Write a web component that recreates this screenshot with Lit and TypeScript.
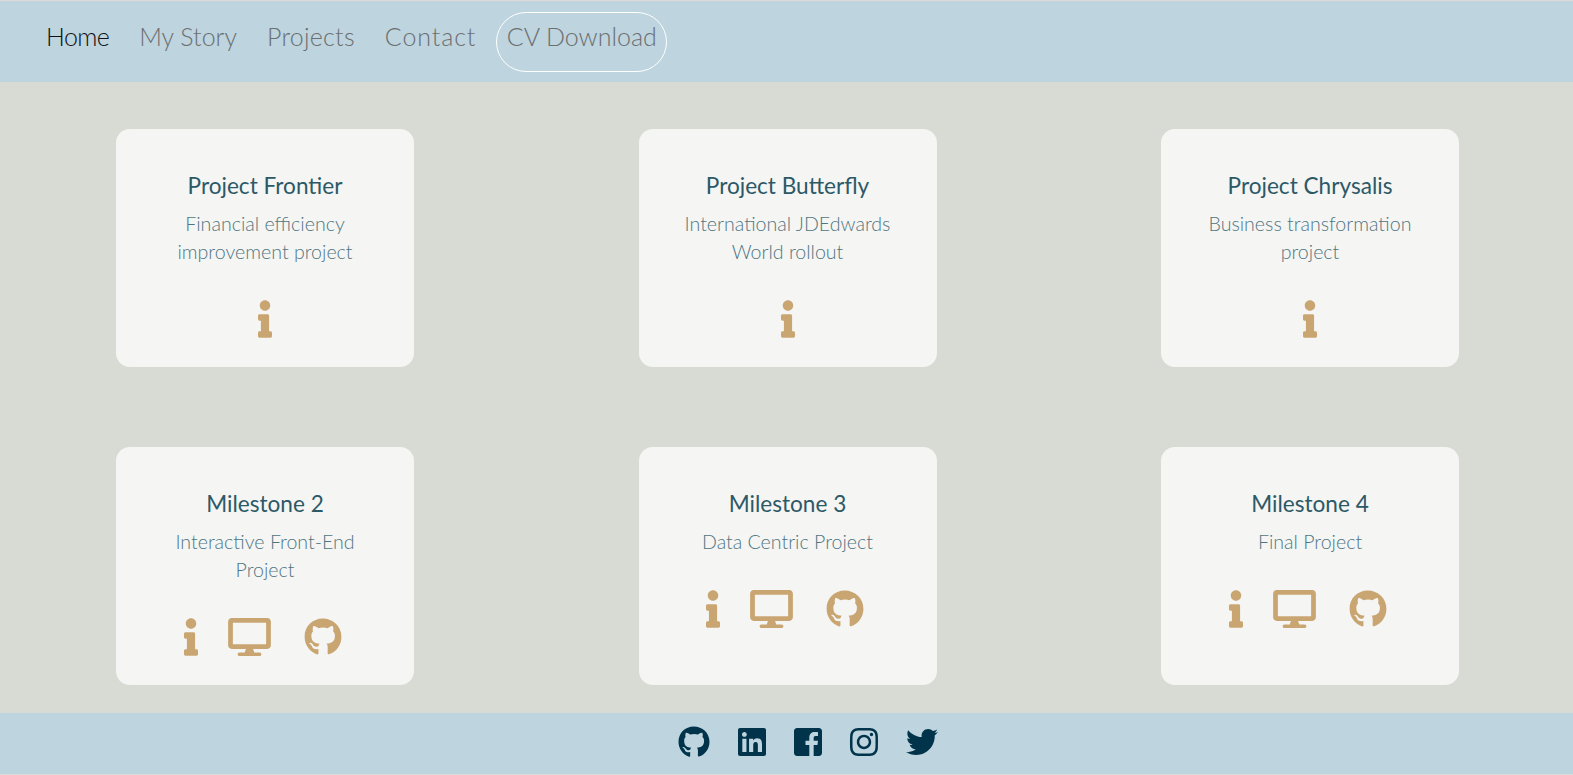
import { LitElement, html, css, svg } from 'lit';
import { customElement } from 'lit/decorators.js';

const GITHUB = svg`<path d="M244.8 8C106.1 8 0 113.3 0 252c0 110.9 69.8 205.8 169.5 239.2 12.8 2.3 17.3-5.6 17.3-12.1 0-6.2-.3-40.400-.3-61.400 0 0-70 15-84.700-29.800 0 0-11.400-29.100-27.800-36.600 0 0-22.900-15.700 1.600-17.300 0 0 24.900 2 38.600 25.800 21.900 38.600 58.600 27.500 72.900 20.900 2.300-16 8.800-27.100 16-33.700-55.900-6.200-112.300-14.300-112.300-110.500 0-27.500 7.600-41.300 23.600-58.900-2.600-6.500-11.100-33.300 2.600-67.900 20.900-6.500 69 27 69 27 20-5.600 41.500-8.500 62.800-8.500s42.800 2.900 62.800 8.500c0 0 48.100-33.600 69-27 13.700 34.700 5.200 61.400 2.600 67.900 16 17.700 25.800 31.500 25.800 58.900 0 96.500-58.900 104.200-114.800 110.500 9.200 7.900 17 22.900 17 46.400 0 33.700-.3 75.400-.3 83.600 0 6.500 4.600 14.400 17.300 12.100C428.200 457.800 496 362.900 496 252 496 113.300 383.500 8 244.800 8z"/>`;

const infoIcon = html`<svg class="i-info" viewBox="0 0 192 512" fill="currentColor"><path d="M20 424.2h20V279.8H20c-11 0-20-9-20-20V212c0-11 9-20 20-20h112c11 0 20 9 20 20v212.2h20c11 0 20 9 20 20V492c0 11-9 20-20 20H20c-11 0-20-9-20-20v-47.8c0-11 9-20 20-20zM96 0C56.200 0 24 32.200 24 72s32.200 72 72 72 72-32.200 72-72S135.800 0 96 0z"/></svg>`;
const desktopIcon = html`<svg class="i-desktop" viewBox="0 0 576 512" fill="currentColor"><path d="M528 0H48C21.500 0 0 21.500 0 48v320c0 26.500 21.500 48 48 48h192l-16 48h-72c-13.300 0-24 10.700-24 24s10.700 24 24 24h272c13.300 0 24-10.700 24-24s-10.700-24-24-24h-72l-16-48h192c26.500 0 48-21.500 48-48V48c0-26.500-21.500-48-48-48zm-16 352H64V64h448v288z"/></svg>`;
const githubIcon = html`<svg class="i-github" viewBox="0 0 496 512" fill="currentColor">${GITHUB}</svg>`;

interface Card {
  title: string;
  text: string;
  full: boolean;
}

const CARDS: Card[] = [
  { title: 'Project Frontier', text: 'Financial efficiency improvement project', full: false },
  { title: 'Project Butterfly', text: 'International JDEdwards World rollout', full: false },
  { title: 'Project Chrysalis', text: 'Business transformation project', full: false },
  { title: 'Milestone 2', text: 'Interactive Front-End Project', full: true },
  { title: 'Milestone 3', text: 'Data Centric Project', full: true },
  { title: 'Milestone 4', text: 'Final Project', full: true },
];

@customElement('app-root')
export class AppRoot extends LitElement {
  static styles = css`
    :host {
      display: block;
      height: 775px;
      overflow: hidden;
      background: #dedbd6;
      font-family: 'Lato', 'Noto Sans', sans-serif;
    }

    header {
      margin-top: 1px;
      height: 81px;
      box-sizing: border-box;
      background: #bed4df;
      display: flex;
      align-items: center;
      padding-left: 31px;
      font-size: 25px;
      color: #6c6f70;
      font-weight: 300;
    }

    header a {
      padding: 0 15px 12px;
      white-space: nowrap;
    }

    header a.active {
      color: #111;
      letter-spacing: -0.6px;
    }

    header a.projects {
      letter-spacing: 0.25px;
    }

    header a.contact {
      letter-spacing: 0.9px;
    }

    header a.cv {
      margin-left: 5px;
      padding: 0 0 12px;
      width: 171px;
      height: 60px;
      box-sizing: border-box;
      border: 1px solid #fff;
      border-radius: 30px;
      display: flex;
      align-items: center;
      justify-content: center;
    }

    main {
      height: 631px;
      box-sizing: border-box;
      background: #d8dbd4;
      padding: 47px 114px 28px 116px;
      display: grid;
      grid-template-columns: repeat(3, 298px);
      grid-template-rows: 238px 238px;
      justify-content: space-between;
      row-gap: 80px;
    }

    .card {
      background: #f5f5f4;
      border-radius: 14px;
      padding: 44px 20px 0;
      display: flex;
      flex-direction: column;
      align-items: center;
      text-align: center;
    }

    h2 {
      margin: 0;
      font-size: 22.6px;
      line-height: 26px;
      font-weight: 400;
      color: #2c5966;
    }

    p {
      margin: 11px 0 0;
      width: 220px;
      font-size: 19.6px;
      line-height: 28px;
      font-weight: 300;
      color: #4f7582;
    }

    .icons {
      margin-top: 34px;
      height: 38px;
      display: flex;
      align-items: center;
      color: #c9a572;
    }

    .i-info { height: 38px; width: 14px; display: block; }
    .i-desktop { height: 38px; width: 43px; display: block; margin-left: 30px; }
    .i-github { height: 38px; width: 38px; display: block; margin-left: 33px; margin-right: 5px; }

    footer {
      height: 61px;
      box-sizing: border-box;
      background: #bed4df;
      padding: 0 0 3px 42px;
      display: flex;
      align-items: center;
      justify-content: center;
      gap: 24px;
      color: #01344b;
    }

    footer svg {
      display: block;
      height: 32px;
      width: 32px;
    }

    footer svg.linkedin,
    footer svg.twitter {
      margin-left: 2px;
    }
  `;

  private renderCard(card: Card) {
    return html`
      <div class="card">
        <h2>${card.title}</h2>
        <p>${card.text}</p>
        <div class="icons">
          ${infoIcon}
          ${card.full ? html`${desktopIcon}${githubIcon}` : ''}
        </div>
      </div>
    `;
  }

  render() {
    return html`
      <header>
        <a class="active">Home</a>
        <a>My Story</a>
        <a class="projects">Projects</a>
        <a class="contact">Contact</a>
        <a class="cv">CV Download</a>
      </header>
      <main>${CARDS.map((c) => this.renderCard(c))}</main>
      <footer>
        <svg viewBox="0 0 496 512" fill="currentColor">${GITHUB}</svg>
        <svg class="linkedin" viewBox="0 0 448 512" fill="currentColor"><path d="M416 32H31.900C14.300 32 0 46.500 0 64.300v383.400C0 465.500 14.300 480 31.900 480H416c17.600 0 32-14.500 32-32.300V64.300c0-17.800-14.400-32.300-32-32.300zM135.400 416H69V202.200h66.500V416zm-33.200-243c-21.300 0-38.500-17.300-38.500-38.500S80.900 96 102.200 96c21.200 0 38.500 17.300 38.500 38.500 0 21.300-17.200 38.500-38.500 38.500zm282.100 243h-66.400V312c0-24.800-.5-56.700-34.500-56.700-34.600 0-39.900 27-39.900 54.900V416h-66.400V202.200h63.700v29.200h.9c8.900-16.800 30.600-34.500 62.900-34.500 67.200 0 79.700 44.300 79.700 101.900V416z"/></svg>
        <svg viewBox="0 0 448 512" fill="currentColor"><path d="M448 80v352c0 26.500-21.500 48-48 48h-85.300V302.800h60.600l8.700-67.600h-69.300V192c0-19.600 5.400-32.900 33.500-32.900H384V98.700c-6.200-.8-27.400-2.700-52.200-2.700-51.600 0-87 31.500-87 89.400v49.900H184v67.600h60.900V480H48c-26.500 0-48-21.500-48-48V80c0-26.500 21.500-48 48-48h352c26.500 0 48 21.500 48 48z"/></svg>
        <svg viewBox="0 0 448 512" fill="currentColor"><path d="M224.100 141c-63.600 0-114.900 51.300-114.900 114.900s51.300 114.900 114.900 114.900S339 319.500 339 255.900 287.700 141 224.100 141zm0 189.600c-41.100 0-74.700-33.500-74.700-74.700s33.500-74.700 74.700-74.700 74.700 33.500 74.700 74.700-33.600 74.700-74.700 74.700zm146.400-194.300c0 14.900-12 26.800-26.800 26.800-14.900 0-26.800-12-26.800-26.800s12-26.800 26.800-26.800 26.800 12 26.800 26.800zm76.100 27.200c-1.700-35.900-9.900-67.700-36.200-93.900-26.200-26.200-58-34.400-93.900-36.200-37-2.100-147.900-2.100-184.900 0-35.800 1.700-67.600 9.900-93.900 36.100s-34.400 58-36.200 93.900c-2.100 37-2.100 147.900 0 184.900 1.700 35.900 9.900 67.700 36.200 93.900s58 34.400 93.900 36.200c37 2.100 147.900 2.100 184.900 0 35.900-1.700 67.700-9.900 93.900-36.200 26.200-26.200 34.400-58 36.200-93.900 2.100-37 2.100-147.800 0-184.800zM398.800 388c-7.800 19.600-22.900 34.700-42.600 42.600-29.500 11.700-99.500 9-132.100 9s-102.700 2.600-132.100-9c-19.600-7.800-34.700-22.900-42.600-42.600-11.700-29.500-9-99.500-9-132.100s-2.600-102.700 9-132.100c7.800-19.600 22.900-34.700 42.600-42.600 29.500-11.700 99.500-9 132.100-9s102.700-2.600 132.100 9c19.600 7.800 34.700 22.900 42.600 42.600 11.700 29.500 9 99.500 9 132.100s2.700 102.700-9 132.100z"/></svg>
        <svg class="twitter" viewBox="0 0 512 512" fill="currentColor"><path d="M459.370 151.716c.325 4.548.325 9.097.325 13.645 0 138.720-105.583 298.558-298.558 298.558-59.452 0-114.680-17.219-161.137-47.106 8.447.974 16.568 1.299 25.340 1.299 49.055 0 94.213-16.568 130.274-44.832-46.132-.975-84.792-31.188-98.112-72.772 6.498.974 12.995 1.624 19.818 1.624 9.421 0 18.843-1.300 27.614-3.573-48.081-9.747-84.143-51.980-84.143-102.985v-1.299c13.969 7.797 30.214 12.670 47.431 13.319-28.264-18.843-46.781-51.005-46.781-87.391 0-19.492 5.197-37.360 14.294-52.954 51.655 63.675 129.300 105.258 216.365 109.807-1.624-7.797-2.599-15.918-2.599-24.040 0-57.828 46.782-104.934 104.934-104.934 30.213 0 57.502 12.670 76.670 33.137 23.715-4.548 46.456-13.320 66.599-25.340-7.798 24.366-24.366 44.833-46.132 57.827 21.117-2.273 41.584-8.122 60.426-16.243-14.292 20.791-32.161 39.308-52.628 54.253z"/></svg>
      </footer>
    `;
  }
}
